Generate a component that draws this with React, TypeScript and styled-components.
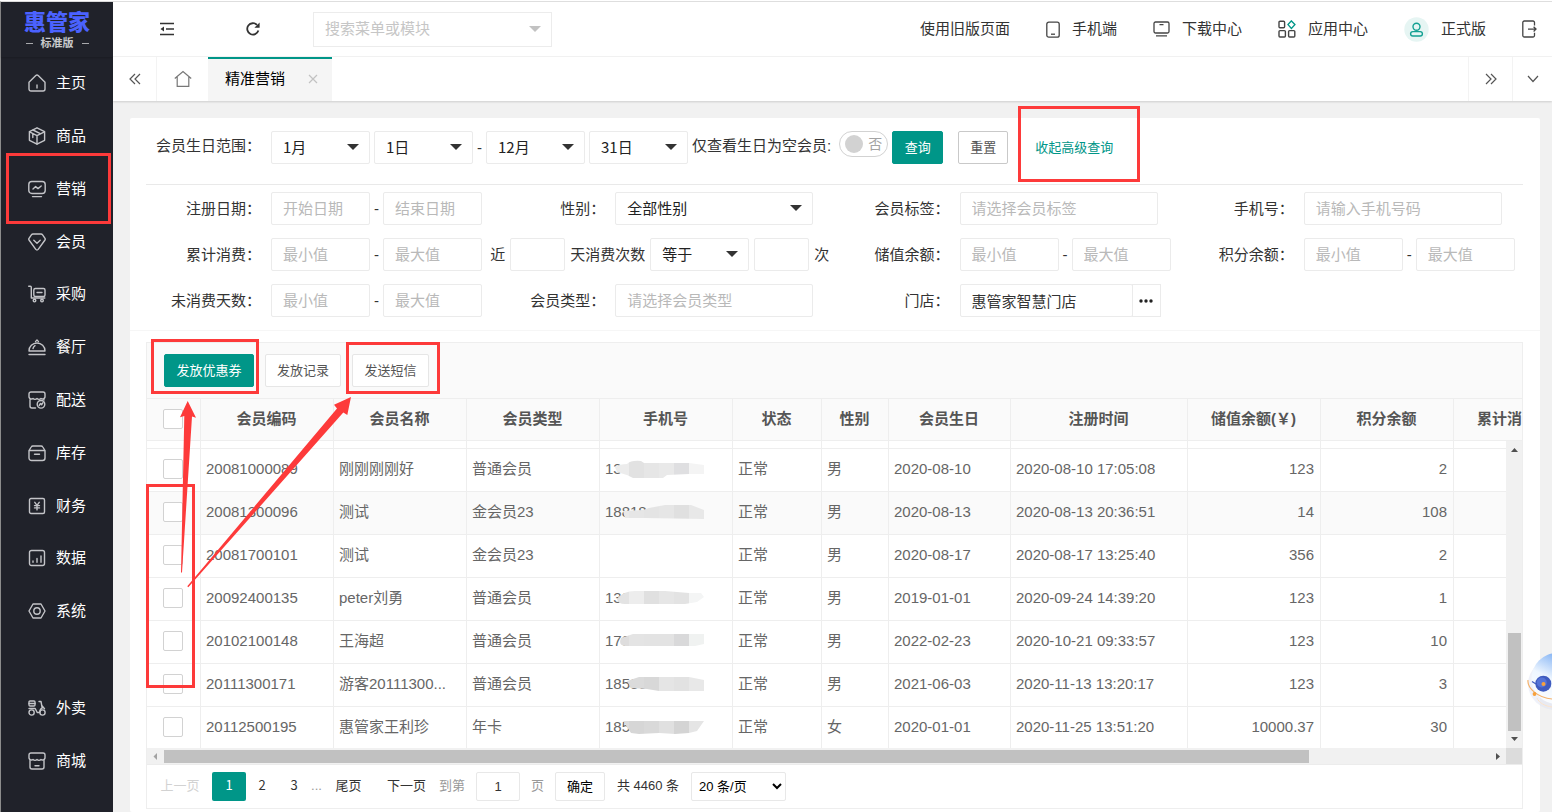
import React, { useState } from 'react';
import styled, { createGlobalStyle, css } from 'styled-components';

const teal = '#009688';
const red = '#fd3a3a';
const line = '#eeeeee';

const GlobalStyle = createGlobalStyle`
  *, *::before, *::after { box-sizing: border-box; }
  body {
    margin: 0;
    background: #fff;
    color: #333;
    font: 15px/24px "Liberation Sans", "Noto Sans CJK SC", sans-serif;
    overflow: hidden;
  }
  button, input, select { font: inherit; color: inherit; margin: 0; }
  button { cursor: pointer; }
  ul { list-style: none; margin: 0; padding: 0; }
  a { color: inherit; text-decoration: none; }
`;

/* ---------- shell ---------- */

const Shell = styled.div`
  display: flex;
  height: calc(100vh - 1px);
  margin-top: 1px;
  border-top: 1px solid #dedede;
  border-left: 1px solid #8c8c8c;
`;

const Sidebar = styled.aside`
  flex: none;
  width: 112px;
  padding-bottom: 25px;
  display: flex;
  flex-direction: column;
  background: #20222a;
  color: #fff;
`;

const Brand = styled.div`
  flex: none;
  height: 55px;
  padding-top: 9px;
  text-align: center;
  box-shadow: 0 1px 2px rgba(0, 0, 0, 0.2);
`;

const BrandName = styled.strong`
  display: block;
  color: #4b62ff;
  font-size: 22px;
  line-height: 24px;
  font-weight: 900;
`;

const BrandEdition = styled.span`
  display: flex;
  align-items: center;
  justify-content: center;
  gap: 8px;
  color: #c9cacc;
  font-size: 11px;
  line-height: 16px;
  font-weight: 700;
  &::before, &::after {
    content: "";
    width: 7px;
    height: 1px;
    background: #a8a9ac;
  }
`;

const Menu = styled.ul`
  flex: 1;
  display: flex;
  flex-direction: column;
`;

const MenuItem = styled.li<{ $group?: boolean }>`
  position: relative;
  flex: 1;
  display: flex;
  margin-top: ${(p) => (p.$group ? 44 : 0)}px;
`;

const MenuLink = styled.a`
  flex: 1;
  display: flex;
  align-items: center;
  gap: 10px;
  padding-left: 27px;
  svg { width: 18px; height: 18px; color: #c3c4c8; }
`;

const Main = styled.div`
  flex: 1;
  min-width: 0;
  display: flex;
  flex-direction: column;
  background: #f1f1f1;
`;

/* A red rectangle drawn round the element it sits in. */
const Ring = styled.span<{ $inset: string }>`
  position: absolute;
  inset: ${(p) => p.$inset};
  border: 3px solid ${red};
  pointer-events: none;
  z-index: 5;
`;

const Anchor = styled.div`
  position: relative;
  display: flex;
`;

/* ---------- top bar ---------- */

const TopBar = styled.header`
  flex: none;
  display: flex;
  align-items: center;
  justify-content: space-between;
  height: 55px;
  padding: 0 15px 0 11px;
  background: #fff;
  border-bottom: 1px solid #f3f3f3;
`;

const TopGroup = styled.div<{ $gap: number }>`
  display: flex;
  align-items: center;
  gap: ${(p) => p.$gap}px;
`;

const ToolButton = styled.button`
  width: 86px;
  height: 54px;
  display: flex;
  align-items: center;
  justify-content: center;
  padding: 0;
  border: 0;
  background: none;
`;

const SearchBox = styled.label`
  display: flex;
  align-items: center;
  width: 239px;
  height: 35px;
  margin-left: 17px;
  padding: 0 10px 0 11px;
  border: 1px solid #ececec;
  input {
    flex: 1;
    min-width: 0;
    padding: 0;
    border: 0;
    outline: 0;
    background: none;
  }
  input::placeholder { color: #c6c6c6; }
`;

const Triangle = styled.span<{ $color: string }>`
  border: 6px solid transparent;
  border-top-color: ${(p) => p.$color};
  border-bottom: 0;
`;

const TopLink = styled.a`
  display: flex;
  align-items: center;
  gap: 12px;
  white-space: nowrap;
  svg { display: block; }
`;

/* ---------- page tabs ---------- */

const TabBar = styled.nav`
  flex: none;
  display: flex;
  height: 44px;
  background: #fff;
  box-shadow: 0 1px 2px rgba(0, 0, 0, 0.15);
  z-index: 1;
`;

const TabButton = styled.button<{ $width: number; $edge?: 'left' | 'right' }>`
  width: ${(p) => p.$width}px;
  padding: 0;
  display: flex;
  align-items: center;
  justify-content: center;
  border: 0;
  background: none;
  ${(p) => p.$edge && css`border-${p.$edge}: 1px solid #f3f3f3;`}
`;

const ActiveTab = styled.div`
  display: flex;
  align-items: center;
  justify-content: space-between;
  width: 124px;
  padding: 0 14px 2px 17px;
  border-top: 2px solid ${teal};
  background: #f5f5f5;
  color: #000;
  button { display: flex; padding: 0; border: 0; background: none; }
`;

const TabSpace = styled.span`
  flex: 1;
`;

/* ---------- card and filters ---------- */

const Card = styled.main`
  flex: 1;
  margin: 17px 12px 0 17px;
  border-radius: 2px;
  background: #fff;
`;

const QuickRow = styled.div`
  display: flex;
  gap: 4px;
  margin: 0 17px 0 16px;
  padding: 13px 0 20px;
  border-bottom: 1px solid #e9e9e9;
`;

const FilterGrid = styled.div`
  display: grid;
  grid-template-columns: repeat(4, 1fr);
  row-gap: 13px;
  padding: 7px 17px 13px 16px;
  border-bottom: 1px solid #f6f6f6;
`;

const Cell = styled.div<{ $gap?: number }>`
  display: flex;
  align-items: center;
  gap: ${(p) => p.$gap ?? 0}px;
  height: 33px;
  white-space: nowrap;
`;

const FieldLabel = styled.label`
  flex: none;
  width: 115px;
  margin-right: 10px;
  text-align: right;
  white-space: nowrap;
`;

const QuickLabel = styled(FieldLabel)`
  margin-right: 6px;
  line-height: 30px;
`;

const QuickText = styled.span`
  line-height: 30px;
  white-space: nowrap;
`;

const Dash = styled.span<{ $width: number }>`
  flex: none;
  width: ${(p) => p.$width}px;
  line-height: 33px;
  text-align: center;
`;

const control = css<{ $width: number }>`
  flex: none;
  width: ${(p) => p.$width}px;
  height: 33px;
  border: 1px solid #ebebeb;
  border-radius: 2px;
  background: #fff;
  outline: 0;
`;

const TextInput = styled.input<{ $width: number }>`
  ${control}
  padding: 0 11px;
  &::placeholder { color: #b9b9b9; }
`;

const SelectBox = styled.span<{ $width: number }>`
  position: relative;
  flex: none;
  width: ${(p) => p.$width}px;
  &::after {
    content: "";
    position: absolute;
    right: 11px;
    top: 13px;
    border: 6px solid transparent;
    border-top-color: #333;
    border-bottom: 0;
    pointer-events: none;
  }
`;

const SelectInput = styled.select<{ $width: number }>`
  ${control}
  display: block;
  appearance: none;
  padding: 0 11px 2px;
  color: #222;
  font-family: "Noto Sans CJK SC", sans-serif;
`;

const StorePicker = styled.div`
  display: flex;
  button {
    width: 29px;
    height: 33px;
    margin-left: -1px;
    padding: 0;
    border: 1px solid #ebebeb;
    background: #fff;
    display: flex;
    align-items: center;
    justify-content: center;
    z-index: 1;
  }
`;

const SwitchLabel = styled.label`
  display: flex;
  align-items: center;
  justify-content: space-between;
  width: 49px;
  height: 26px;
  margin-left: 4px;
  padding: 0 5px;
  border: 1px solid #d2d2d2;
  border-radius: 13px;
  color: #a3a3a3;
  font-size: 14px;
  input {
    appearance: none;
    width: 18px;
    height: 18px;
    margin: 0;
    border-radius: 9px;
    background: #d2d2d2;
  }
`;

const Button = styled.button<{ $kind: 'primary' | 'outline' | 'soft'; $width: number }>`
  width: ${(p) => p.$width}px;
  height: 33px;
  padding: 0;
  border-radius: 2px;
  font-size: 13px;
  white-space: nowrap;
  ${(p) =>
    p.$kind === 'primary'
      ? css`border: 1px solid ${teal}; background: ${teal}; color: #fff;`
      : css`
          border: 1px solid ${p.$kind === 'outline' ? '#c9c9c9' : '#e6e6e6'};
          background: #fff;
          color: #555;
        `}
`;

const QuickActions = styled.div`
  display: flex;
  align-items: center;
  gap: 15px;
`;

const CollapseLink = styled.a`
  padding-left: 12px;
  color: ${teal};
  font-size: 13px;
  line-height: 33px;
`;

/* ---------- table ---------- */

const Panel = styled.section`
  position: relative;
  margin: 11px 17px 0 16px;
  border: 1px solid ${line};
`;

const PanelTools = styled.div`
  display: flex;
  gap: 11px;
  height: 56px;
  padding: 11px 17px;
  border-bottom: 1px solid ${line};
  background: #fafafa;
`;

const TableView = styled.div`
  position: relative;
  height: 349px;
  overflow: hidden;
`;

const Table = styled.table`
  width: 1440px;
  table-layout: fixed;
  border-collapse: separate;
  border-spacing: 0;
  color: #666;
`;

const Th = styled.th`
  height: 42px;
  padding: 0 6px 2px 5px;
  border: solid ${line};
  border-width: 0 1px 1px 0;
  background: #fafafa;
  color: #555;
  font-weight: 700;
  white-space: nowrap;
`;

const Td = styled.td<{ $right?: boolean }>`
  height: 43px;
  padding: 0 6px 2px 5px;
  border: solid ${line};
  border-width: 0 1px 1px 0;
  text-align: ${(p) => (p.$right ? 'right' : 'left')};
  overflow: hidden;
  text-overflow: ellipsis;
  white-space: nowrap;
`;

const Row = styled.tr<{ $hover?: boolean }>`
  background: ${(p) => (p.$hover ? '#fafafa' : '#fff')};
`;

const CutTd = styled(Td)`
  height: 8px;
`;

const Tick = styled.input`
  appearance: none;
  display: block;
  width: 20px;
  height: 20px;
  && { margin: 0 0 0 11px; }
  border: 1px solid #d2d2d2;
  border-radius: 2px;
  background: #fff;
`;

const Phone = styled.span`
  position: relative;
  display: block;
  svg { position: absolute; left: 0; top: 0; }
`;

const VScroll = styled.div`
  position: absolute;
  top: 42px;
  right: 0;
  bottom: 0;
  width: 16px;
  padding: 0 1px 0 2px;
  display: flex;
  flex-direction: column;
  align-items: center;
  background: #f1f1f1;
`;

const VThumb = styled.span`
  width: 13px;
  height: 98px;
  margin-top: auto;
  background: #c1c1c1;
`;

const HScroll = styled.div`
  display: flex;
  align-items: center;
  height: 17px;
  background: #f1f1f1;
  border-bottom: 1px solid #ececec;
`;

const HTrack = styled.span`
  flex: 1;
  display: flex;
  height: 13px;
  padding-right: 180px;
  &::before {
    content: "";
    flex: 1;
    background: #c1c1c1;
  }
`;

const ScrollArrow = styled.svg`
  flex: none;
  display: block;
`;

const Corner = styled.span`
  width: 16px;
  height: 16px;
  background: #dcdcdc;
`;

const Pager = styled.nav`
  display: flex;
  align-items: center;
  height: 43px;
  padding-left: 13px;
  font-size: 13px;
  white-space: nowrap;
`;

const PageLink = styled.a<{ $width: number; $state?: 'off' | 'on' }>`
  width: ${(p) => p.$width}px;
  height: 29px;
  line-height: 26px;
  text-align: center;
  border-radius: 2px;
  color: ${(p) => (p.$state === 'on' ? '#fff' : p.$state === 'off' ? '#d2d2d2' : '#333')};
  background: ${(p) => (p.$state === 'on' ? teal : 'none')};
  font-family: "Noto Sans CJK SC", sans-serif;
`;

const PagerNote = styled.span<{ $width: number; $dark?: boolean }>`
  width: ${(p) => p.$width}px;
  line-height: 27px;
  height: 29px;
  text-align: center;
  color: ${(p) => (p.$dark ? '#333' : '#999')};
`;

const PagerInput = styled.input`
  width: 44px;
  height: 29px;
  padding: 0;
  border: 1px solid #e8e8e8;
  border-radius: 2px;
  text-align: center;
`;

const PagerButton = styled.button`
  width: 50px;
  height: 29px;
  padding: 0;
  border: 1px solid #e8e8e8;
  border-radius: 2px;
  background: #fff;
  color: #000;
`;

const PagerSelect = styled.select`
  width: 95px;
  height: 29px;
  padding: 0 3px;
  border: 1px solid #e8e8e8;
  border-radius: 2px;
  background: #fff;
  color: #000;
`;

const Arrows = styled.svg`
  position: absolute;
  left: -1px;
  top: -1px;
  z-index: 6;
  pointer-events: none;
`;

const Assistant = styled.svg`
  position: fixed;
  right: 0;
  bottom: 92px;
  z-index: 7;
`;

/* ---------- drawings ---------- */

const Glyph = ({ children, size = 18 }: { children: React.ReactNode; size?: number }) => (
  <svg
    width={size}
    height={size}
    viewBox="0 0 18 18"
    fill="none"
    stroke="currentColor"
    strokeWidth="1.4"
    strokeLinecap="round"
    strokeLinejoin="round"
    aria-hidden="true"
  >
    {children}
  </svg>
);

const menuIcons: Record<string, React.ReactNode> = {
  主页: (
    <>
      <path d="M1 8.2 7.8 1.6a1.7 1.7 0 0 1 2.4 0L17 8.2V15a2 2 0 0 1-2 2H3a2 2 0 0 1-2-2Z" />
      <path d="M9 11v3" />
    </>
  ),
  商品: (
    <>
      <path d="M9 .8 16.6 4.700V13.300L9 17.200 1.400 13.300V4.700Z" />
      <path d="M1.600 4.900 9 8.600l7.400-3.700M9 8.600V17M4.800 7v3.600M5 3l7.300 3.600" />
    </>
  ),
  营销: (
    <>
      <rect x=".8" y="1.500" width="16.400" height="12" rx="3" />
      <path d="M5 9l2.600-2.400 2.400 2L13.200 6M4.500 16.600h9" />
    </>
  ),
  会员: (
    <>
      <path d="M5 1h8a2 2 0 0 1 1.600.8l2.400 3.600a1.500 1.500 0 0 1 0 1.600L10.200 16.400a1.600 1.600 0 0 1-2.400 0L1 7a1.500 1.500 0 0 1 0-1.600l2.400-3.600A2 2 0 0 1 5 1Z" />
      <path d="m5.800 7.200 3.200 3 3.200-3" />
    </>
  ),
  采购: (
    <>
      <path d="M.7 1.200h1.600a1 1 0 0 1 1 1V13h13.500" />
      <rect x="5.800" y="3.500" width="11.200" height="8" rx="1.500" />
      <path d="M9 7.500h5" />
      <circle cx="6.500" cy="15.600" r="1.300" />
      <circle cx="14" cy="15.600" r="1.300" />
    </>
  ),
  餐厅: (
    <>
      <path d="M1 13a8 8 0 0 1 16 0ZM1 16.500h16M7.500 3.600 9 1.900l1.500 1.700M5 10.500a4.500 4.500 0 0 1 2-2.800" />
    </>
  ),
  配送: (
    <>
      <path d="M7.500 17H4a2 2 0 0 1-2-2V8.500M16 8.500v.5M3 1h12a2 2 0 0 1 2 2v3a2.500 2.500 0 0 1-4 1.500 2.700 2.700 0 0 1-4 0 2.700 2.700 0 0 1-4 0A2.500 2.500 0 0 1 1 6V3a2 2 0 0 1 2-2Z" />
      <circle cx="13" cy="13.300" r="3.800" />
      <path d="m11.200 14.500 1.300-2 1.200 1.200 1.300-2" />
    </>
  ),
  库存: (
    <>
      <path d="M1 6.500h16M1 6.500 3.200 3a2 2 0 0 1 1.700-1h8.200a2 2 0 0 1 1.700 1L17 6.500V14a2.500 2.500 0 0 1-2.500 2.500h-11A2.500 2.500 0 0 1 1 14ZM6.500 10.300h5" />
    </>
  ),
  财务: (
    <>
      <rect x="1.500" y="1.500" width="15" height="15" rx="1.500" />
      <path d="m6.800 5.300 2.200 3 2.200-3M9 8.500v4.400M6.500 8.600h5M6.500 10.900h5" />
    </>
  ),
  数据: (
    <>
      <rect x="1.500" y="1.500" width="15" height="15" rx="2" />
      <path d="M5 12v1.200M9 9.500v3.700M13 7v6.200" />
    </>
  ),
  系统: (
    <>
      <path d="M5 2h8l4 7-4 7H5L1 9Z" />
      <circle cx="9" cy="9" r="3.200" />
    </>
  ),
  外卖: (
    <>
      <rect x="1" y="2" width="6" height="5" rx="1" />
      <circle cx="3.600" cy="13.500" r="2.600" />
      <circle cx="14.500" cy="13.500" r="2.600" />
      <path d="M1 9.500h6.200l2 4h2.500c.2-2.500 1.300-4 2.500-4.500L13 2.500h-2M13.800 6.500 16.500 9.800M1 4.500h6" />
    </>
  ),
  商城: (
    <>
      <path d="M3 1h12a2 2 0 0 1 2 2v3a2.500 2.500 0 0 1-4 1.500 2.700 2.700 0 0 1-4 0 2.700 2.700 0 0 1-4 0A2.500 2.500 0 0 1 1 6V3a2 2 0 0 1 2-2Z" />
      <path d="M2 8.500V15a2 2 0 0 0 2 2h10a2 2 0 0 0 2-2V8.500M7 13.800h4" />
    </>
  ),
};

const FoldIcon = () => (
  <svg width="16" height="14" viewBox="0 0 16 14" fill="none" stroke="#333" strokeWidth="1.6" aria-hidden="true">
    <path d="M1 1.500h14M7 7h8M1 12.500h14" />
    <path d="M5 4.500 1.500 7 5 9.500Z" fill="#333" stroke="none" />
  </svg>
);

const RefreshIcon = () => (
  <svg width="14" height="14" viewBox="0 0 14 14" fill="none" stroke="#333" strokeWidth="1.8" aria-hidden="true">
    <path d="M12.400 8.600A5.700 5.700 0 1 1 11 2.900" />
    <path d="M13.600.6v5.200H8.400Z" fill="#333" stroke="none" />
  </svg>
);

const PhoneIcon = () => (
  <svg width="14" height="17" viewBox="0 0 14 17" fill="none" stroke="#444" strokeWidth="1.300" aria-hidden="true">
    <rect x=".8" y="1.200" width="12.400" height="15" rx="2" />
    <path d="M5 13.200h4" />
  </svg>
);

const ScreenIcon = () => (
  <svg width="17" height="16" viewBox="0 0 17 16" fill="none" stroke="#444" strokeWidth="1.300" aria-hidden="true">
    <rect x="1" y="1" width="15" height="11" rx="1.500" />
    <path d="M6.500 3.600h4M3 14.800h11" />
  </svg>
);

const AppsIcon = () => (
  <svg width="18" height="18" viewBox="0 0 18 18" fill="none" stroke="#444" strokeWidth="1.400" aria-hidden="true">
    <rect x="1" y="1.200" width="5.600" height="6.600" rx="1" />
    <rect x="1" y="10.600" width="6.400" height="6.400" rx="1" />
    <rect x="10.600" y="10.600" width="6.200" height="6.400" rx="1" />
    <path d="m13.400.9 3.500 3.700-3.500 3.800L10 4.600Z" stroke={teal} />
  </svg>
);

const UserIcon = () => (
  <svg width="25" height="25" viewBox="0 0 25 25" fill="none" stroke="#12a092" strokeWidth="1.400" aria-hidden="true">
    <circle cx="12.500" cy="12.500" r="12.200" fill="#e6f5f3" stroke="none" />
    <circle cx="12.500" cy="9.800" r="3.500" />
    <rect x="6.600" y="14.600" width="11.800" height="4.400" rx="2.200" />
  </svg>
);

const ExitIcon = () => (
  <svg width="15" height="18" viewBox="0 0 15 18" fill="none" stroke="#444" strokeWidth="1.300" aria-hidden="true">
    <path d="M12.500 5.500V2.500A1.500 1.500 0 0 0 11 1H2.300A1.500 1.500 0 0 0 .8 2.500v13A1.500 1.500 0 0 0 2.300 17H11a1.500 1.500 0 0 0 1.500-1.500v-2.800M6 9.100h8M11.600 6.700 14 9.100l-2.400 2.400" />
  </svg>
);

const Chevron = ({ d, w = 12, h = 12, color = '#555' }: { d: string; w?: number; h?: number; color?: string }) => (
  <svg width={w} height={h} viewBox={`0 0 ${w} ${h}`} fill="none" stroke={color} strokeWidth="1.200" aria-hidden="true">
    <path d={d} />
  </svg>
);

/* Mosaic strokes that hide the end of a phone number: outline plus 15px tiles. */
type Mask = { outline: string; tiles: string[] };

const masks: Mask[] = [
  {
    outline: 'M10 10Q15 7 22 7Q26 3 36 4L39 6L84 6L99 8V17H84L62 18L58 21H28L22 18L12 15Z',
    tiles: ['#f0f0f0', '#ececec', '#e2e2e2', '#e6e6e6', '#e9e9e9', '#dfdfe1', '#f4f4f4'],
  },
  {
    outline: 'M18 11L38 10L44 8L60 5H86L99 10V19L40 18L20 18Z',
    tiles: ['#e9e9e9', '#e9e9e9', '#e6e6e6', '#e4e4e4', '#e6e6e6', '#e0e0e0', '#e8e8e8'],
  },
  { outline: '', tiles: [] },
  {
    outline: 'M12 13Q18 5 30 5H60L84 7L96 7L99 11L92 16L80 18H20Q13 18 12 13Z',
    tiles: ['#e9e9e9', '#e3e3e3', '#ededed', '#e0e0e0', '#e6e6e6', '#e3e3e3', '#f4f5f5'],
  },
  {
    outline: 'M16 9L28 5H99V15L90 17H20Q13 16 16 9Z',
    tiles: ['#d7d7d7', '#dedddd', '#e4e4e4', '#e3e3e3', '#e3e3e3', '#d9d9da', '#f0f2f1'],
  },
  {
    outline: 'M22 9L34 5H84L99 8V19H54L42 17L26 16Z',
    tiles: ['#dedede', '#dedede', '#dbdbdb', '#d8d8d8', '#e5e5e5', '#e2e2e2', '#e8e8e8'],
  },
  {
    outline: 'M18 6L40 6H99L92 16L84 18L70 19L54 18L34 19L26 18Z',
    tiles: ['#d9d9d9', '#dcdcdc', '#d6d6d6', '#d9d9d9', '#e0e0e0', '#d4d4d4', '#e5e5e5'],
  },
];

const MaskDrawing = ({ index }: { index: number }) => {
  const mask = masks[index];
  if (!mask.outline) return null;
  return (
    <svg width="100" height="24" viewBox="0 0 100 24" aria-hidden="true">
      <clipPath id={`mask-${index}`}>
        <path d={mask.outline} />
      </clipPath>
      <g clipPath={`url(#mask-${index})`}>
        {mask.tiles.map((fill, i) => (
          <rect key={i} x={i * 15 - 6} y="0" width="15" height="24" fill={fill} />
        ))}
      </g>
    </svg>
  );
};

/* ---------- data ---------- */

const menu = ['主页', '商品', '营销', '会员', '采购', '餐厅', '配送', '库存', '财务', '数据', '系统', '外卖', '商城'];

const columns = [
  { name: '会员编码', width: 133 },
  { name: '会员名称', width: 133 },
  { name: '会员类型', width: 133 },
  { name: '手机号', width: 133 },
  { name: '状态', width: 89 },
  { name: '性别', width: 67 },
  { name: '会员生日', width: 122 },
  { name: '注册时间', width: 177 },
  { name: '储值余额(￥)', width: 133 },
  { name: '积分余额', width: 133 },
  { name: '累计消费(￥)', width: 133 },
];

const members = [
  ['20081000089', '刚刚刚刚好', '普通会员', '13', '正常', '男', '2020-08-10', '2020-08-10 17:05:08', '123', '2'],
  ['20081300096', '测试', '金会员23', '18818', '正常', '男', '2020-08-13', '2020-08-13 20:36:51', '14', '108'],
  ['20081700101', '测试', '金会员23', '', '正常', '男', '2020-08-17', '2020-08-17 13:25:40', '356', '2'],
  ['20092400135', 'peter刘勇', '普通会员', '133', '正常', '男', '2019-01-01', '2020-09-24 14:39:20', '123', '1'],
  ['20102100148', '王海超', '普通会员', '178', '正常', '男', '2022-02-23', '2020-10-21 09:33:57', '123', '10'],
  ['20111300171', '游客20111300...', '普通会员', '18536', '正常', '男', '2021-06-03', '2020-11-13 13:20:17', '123', '3'],
  ['20112500195', '惠管家王利珍', '年卡', '185', '正常', '女', '2020-01-01', '2020-11-25 13:51:20', '10000.37', '30'],
];

/* ---------- parts ---------- */

const Select = ({ label, value, width, id }: { label: string; value: string; width: number; id?: string }) => (
  <SelectBox $width={width}>
    <SelectInput $width={width} id={id} aria-label={label} defaultValue={value}>
      <option>{value}</option>
    </SelectInput>
  </SelectBox>
);

const RangeField = ({ id, label, from = '最小值', to = '最大值' }: { id: string; label: string; from?: string; to?: string }) => (
  <Cell>
    <FieldLabel htmlFor={id}>{label}：</FieldLabel>
    <TextInput id={id} $width={99} placeholder={from} />
    <Dash $width={13}>-</Dash>
    <TextInput $width={99} placeholder={to} aria-label={`${label}${to}`} />
  </Cell>
);

const TextField = ({ id, label, hint }: { id: string; label: string; hint: string }) => (
  <Cell>
    <FieldLabel htmlFor={id}>{label}：</FieldLabel>
    <TextInput id={id} $width={198} placeholder={hint} />
  </Cell>
);

const Filters = () => {
  const [onlyEmpty, setOnlyEmpty] = useState(false);
  return (
    <form onSubmit={(e) => e.preventDefault()}>
      <QuickRow>
        <QuickLabel htmlFor="month-from">会员生日范围：</QuickLabel>
        <Select id="month-from" label="开始月" value="1月" width={99} />
        <Select label="开始日" value="1日" width={99} />
        <Dash $width={5}>-</Dash>
        <Select label="结束月" value="12月" width={99} />
        <Select label="结束日" value="31日" width={99} />
        <QuickText>仅查看生日为空会员:</QuickText>
        <SwitchLabel>
          <input type="checkbox" aria-label="仅查看生日为空会员" checked={onlyEmpty} onChange={() => setOnlyEmpty(!onlyEmpty)} />
          <span>{onlyEmpty ? '是' : '否'}</span>
        </SwitchLabel>
        <QuickActions>
          <Button $kind="primary" $width={51}>查询</Button>
          <Button type="reset" $kind="outline" $width={50}>重置</Button>
          <Anchor>
            <CollapseLink href="#filters">收起高级查询</CollapseLink>
            <Ring $inset="-25px -27px -18px -5px" />
          </Anchor>
        </QuickActions>
      </QuickRow>
      <FilterGrid id="filters">
        <RangeField id="reg" label="注册日期" from="开始日期" to="结束日期" />
        <Cell>
          <FieldLabel htmlFor="sex">性别：</FieldLabel>
          <Select id="sex" label="性别" value="全部性别" width={198} />
        </Cell>
        <TextField id="tag" label="会员标签" hint="请选择会员标签" />
        <TextField id="phone" label="手机号" hint="请输入手机号码" />

        <RangeField id="spent" label="累计消费" />
        <Cell $gap={5}>
          <label htmlFor="days">近</label>
          <TextInput id="days" $width={55} />
          <label htmlFor="times">天消费次数</label>
          <Select label="比较" value="等于" width={99} />
          <TextInput id="times" $width={55} />
          <span>次</span>
        </Cell>
        <RangeField id="stored" label="储值余额" />
        <RangeField id="points" label="积分余额" />

        <RangeField id="idle" label="未消费天数" />
        <TextField id="type" label="会员类型" hint="请选择会员类型" />
        <Cell>
          <FieldLabel htmlFor="store">门店：</FieldLabel>
          <StorePicker>
            <TextInput id="store" $width={173} defaultValue="惠管家智慧门店" />
            <button type="button" aria-label="选择门店">
              <svg width="14" height="4" viewBox="0 0 14 4" fill="#222" aria-hidden="true">
                <circle cx="2" cy="2" r="1.700" />
                <circle cx="7" cy="2" r="1.700" />
                <circle cx="12" cy="2" r="1.700" />
              </svg>
            </button>
          </StorePicker>
        </Cell>
      </FilterGrid>
    </form>
  );
};

const MemberTable = () => (
  <TableView>
    <Table>
      <colgroup>
        <col style={{ width: 54 }} />
        {columns.map((c) => (
          <col key={c.name} style={{ width: c.width }} />
        ))}
      </colgroup>
      <thead>
        <tr>
          <Th scope="col">
            <Tick type="checkbox" aria-label="全选" />
          </Th>
          {columns.map((c) => (
            <Th key={c.name} scope="col">{c.name}</Th>
          ))}
        </tr>
      </thead>
      <tbody>
        <tr aria-hidden="true">
          <CutTd />
          {columns.map((c) => (
            <CutTd key={c.name} />
          ))}
        </tr>
        {members.map((m, r) => (
          <Row key={m[0]} $hover={r === 1}>
            <Td>
              <Tick type="checkbox" aria-label={m[0]} />
            </Td>
            {m.map((value, i) => (
              <Td key={i} $right={i >= 8}>
                {i === 3 ? (
                  <Phone>
                    {value || '\u00a0'}
                    <MaskDrawing index={r} />
                  </Phone>
                ) : (
                  value
                )}
              </Td>
            ))}
            <Td />
          </Row>
        ))}
      </tbody>
    </Table>
    <VScroll>
      <ScrollArrow width="13" height="16" viewBox="0 0 13 16"><path d="M3 11h7L6.500 7Z" fill="#505050" /></ScrollArrow>
      <VThumb />
      <ScrollArrow width="13" height="17" viewBox="0 0 13 17"><path d="M3 6h7L6.500 10Z" fill="#505050" /></ScrollArrow>
    </VScroll>
  </TableView>
);

export default function App() {
  return (
    <>
      <GlobalStyle />
      <Shell>
        <Sidebar>
          <Brand>
            <BrandName>惠管家</BrandName>
            <BrandEdition>标准版</BrandEdition>
          </Brand>
          <Menu>
            {menu.map((name) => (
              <MenuItem key={name} $group={name === '外卖'}>
                <MenuLink href="#">
                  <Glyph>{menuIcons[name]}</Glyph>
                  {name}
                </MenuLink>
                {name === '营销' && <Ring $inset="-10px 2px -9px 5px" />}
              </MenuItem>
            ))}
          </Menu>
        </Sidebar>

        <Main>
          <TopBar>
            <TopGroup $gap={0}>
              <ToolButton aria-label="收起菜单"><FoldIcon /></ToolButton>
              <ToolButton aria-label="刷新"><RefreshIcon /></ToolButton>
              <SearchBox>
                <input aria-label="搜索" placeholder="搜索菜单或模块" />
                <Triangle $color="#c2c2c2" />
              </SearchBox>
            </TopGroup>
            <TopGroup $gap={36}>
              <TopLink href="#">使用旧版页面</TopLink>
              <TopLink href="#"><PhoneIcon />手机端</TopLink>
              <TopLink href="#"><ScreenIcon />下载中心</TopLink>
              <TopLink href="#"><AppsIcon />应用中心</TopLink>
              <TopLink href="#"><UserIcon />正式版</TopLink>
              <TopLink href="#" aria-label="退出"><ExitIcon /></TopLink>
            </TopGroup>
          </TopBar>

          <TabBar>
            <TabButton $width={44} $edge="right" aria-label="向左"><Chevron d="M6 1 1 6l5 5M11 1 6 6l5 5" /></TabButton>
            <TabButton $width={51} aria-label="主页">
              <Chevron w={18} h={18} d="M.8 8.500 9 1.500l8.200 7M3.200 7v9.300h11.600V7" color="#777" />
            </TabButton>
            <ActiveTab>
              精准营销
              <button aria-label="关闭"><Chevron w={10} h={10} d="m1 1 8 8M9 1 1 9" color="#c2c2c2" /></button>
            </ActiveTab>
            <TabSpace />
            <TabButton $width={44} $edge="left" aria-label="向右"><Chevron d="m1 1 5 5-5 5M6 1l5 5-5 5" /></TabButton>
            <TabButton $width={40} $edge="left" aria-label="更多"><Chevron h={8} d="m1 1 5 5.500L11 1" /></TabButton>
          </TabBar>

          <Card>
            <Filters />
            <Panel>
              <PanelTools>
                <Anchor>
                  <Button $kind="primary" $width={90}>发放优惠券</Button>
                  <Ring $inset="-15px -5px -7px -13px" />
                </Anchor>
                <Button $kind="soft" $width={76}>发放记录</Button>
                <Anchor>
                  <Button $kind="soft" $width={77}>发送短信</Button>
                  <Ring $inset="-12px -11px -7px -6px" />
                </Anchor>
              </PanelTools>
              <MemberTable />
              <HScroll>
                <ScrollArrow width="17" height="13" viewBox="0 0 17 13"><path d="M10 3v7L6.500 6.500Z" fill="#a3a3a3" /></ScrollArrow>
                <HTrack />
                <ScrollArrow width="17" height="13" viewBox="0 0 17 13"><path d="M7 3v7l4-3.500Z" fill="#505050" /></ScrollArrow>
                <Corner />
              </HScroll>
              <Pager>
                <PageLink $width={40} $state="off">上一页</PageLink>
                <PagerNote $width={12} />
                <PageLink href="#" $width={34} $state="on">1</PageLink>
                <PageLink href="#" $width={32}>2</PageLink>
                <PageLink href="#" $width={32}>3</PageLink>
                <PagerNote $width={13}>...</PagerNote>
                <PageLink href="#" $width={51}>尾页</PageLink>
                <PageLink href="#" $width={65}>下一页</PageLink>
                <PagerNote $width={26}>到第</PagerNote>
                <PagerNote $width={11} />
                <PagerInput aria-label="页码" defaultValue="1" />
                <PagerNote $width={35}>页</PagerNote>
                <PagerButton>确定</PagerButton>
                <PagerNote $width={86} $dark>共 4460 条</PagerNote>
                <PagerSelect aria-label="每页条数" defaultValue="20 条/页">
                  <option>20 条/页</option>
                </PagerSelect>
              </Pager>
              <Arrows width="300" height="400" viewBox="146 342 300 400" fill={red} aria-hidden="true">
                <rect x="147.500" y="485.500" width="46" height="201" fill="none" stroke={red} strokeWidth="3" />
                <path d="M187.700 401 196 417.700 192 416.500 182 572.600H181L184.300 416 180 417.300Z" />
                <path d="M351 397 347.300 415 343.300 412.500 188.300 587.300 187.300 586.300 337 408.500 334 404.700Z" />
              </Arrows>
            </Panel>
          </Card>
        </Main>
      </Shell>

      <Assistant width="28" height="72" viewBox="1524 648 28 72" role="img" aria-label="客服助手">
        <defs>
          <linearGradient id="ball" x1="0" y1="1" x2="0.500" y2="0">
            <stop offset="0" stopColor="#ffffff" />
            <stop offset="0.550" stopColor="#eef6ff" />
            <stop offset="1" stopColor="#7fb0f3" />
          </linearGradient>
        </defs>
        <ellipse cx="1556" cy="684" rx="28" ry="26" fill="#dfe4f3" opacity="0.500" />
        <circle cx="1557" cy="678.500" r="25.500" fill="url(#ball)" />
        <circle cx="1543.300" cy="683.700" r="8" fill="#3f5bbf" />
        <circle cx="1541.800" cy="682.500" r="5" fill="#5573d6" />
        <circle cx="1543.500" cy="684" r="2" fill="#f7a13c" />
        <path d="M1532 681.500l4 2.500" stroke="#3f5bbf" strokeWidth="1.200" />
        <path d="M1528 680c-1 8 10 18 24 19" fill="none" stroke="#f5b26b" strokeWidth="1.200" />
        <path d="M1537 698c2 5 8 8 15 9" fill="none" stroke="#fbe3cb" strokeWidth="1" />
        <circle cx="1534.500" cy="694" r="1.900" fill="#f7a13c" />
      </Assistant>
    </>
  );
}
